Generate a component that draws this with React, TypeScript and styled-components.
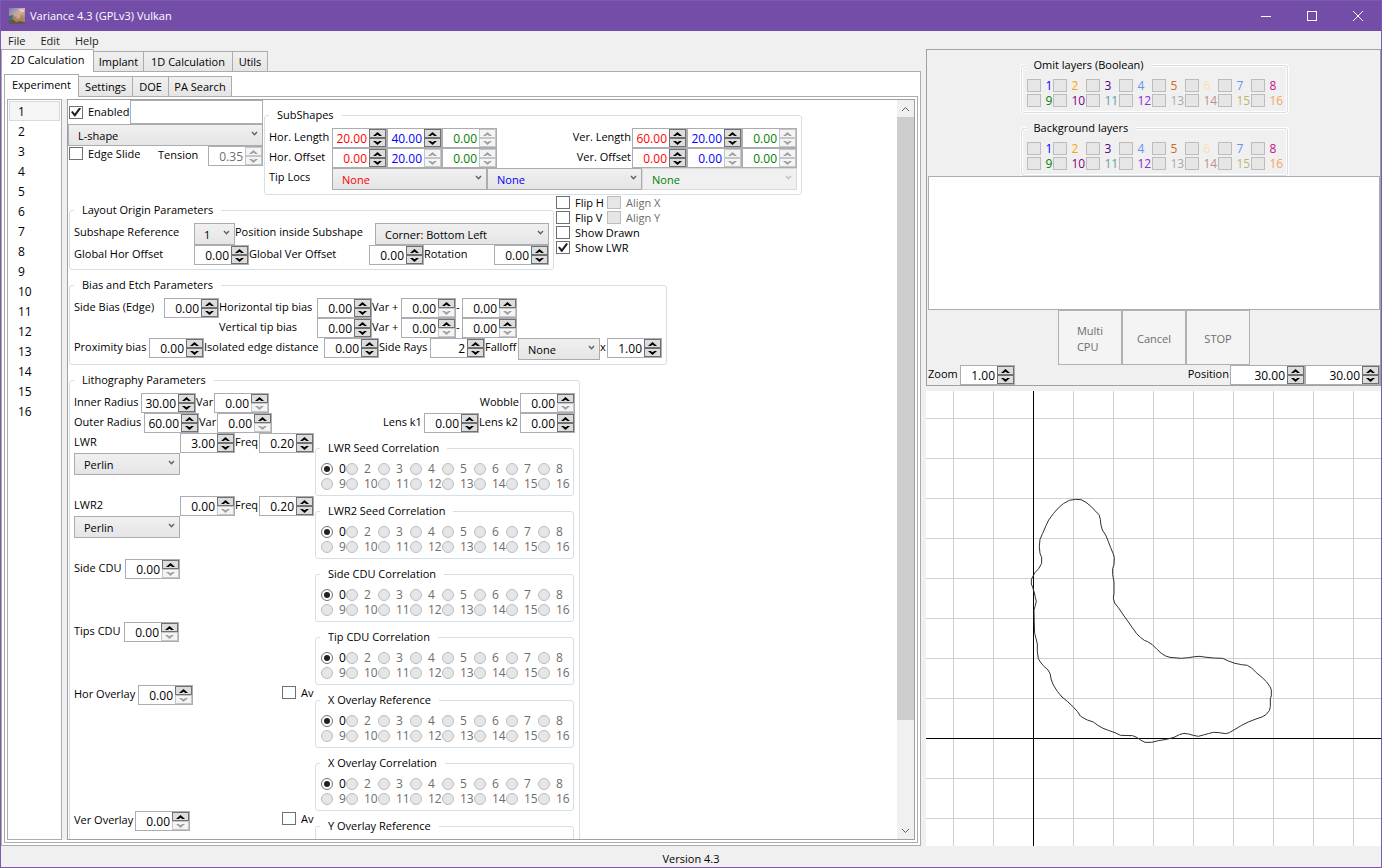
import React from "react";
import styled, { createGlobalStyle, css } from "styled-components";

const GlobalStyle = createGlobalStyle`
  *, *::before, *::after { box-sizing: border-box; }
  body { margin: 0; background: #f0f0f0; }
  body, button, input, select {
    font-family: "Open Sans", "Noto Sans", sans-serif;
    font-size: 11px;
    line-height: 16px;
    color: #000;
  }
`;

/* ---------- window frame ---------- */

const Window = styled.div`
  display: flex;
  flex-direction: column;
  height: 100vh;
  min-height: 500px;
  border: 1px solid #7d5ab0;
  background: #f0f0f0;
  overflow: hidden;
`;

const TitleBar = styled.header`
  display: flex;
  flex: none;
  align-items: center;
  height: 30px;
  padding-left: 8px;
  gap: 5px;
  background: #744da9;
  color: #fff;
`;

const Title = styled.h1`
  flex: 1;
  margin: 0;
  font-size: 11px;
  font-weight: 400;
`;

const CaptionButton = styled.button`
  display: grid;
  place-items: center;
  width: 46px;
  height: 30px;
  padding: 0;
  border: 0;
  background: none;
  color: #fff;
`;

const MenuBar = styled.nav`
  display: flex;
  flex: none;
  height: 18px;
  padding-left: 1px;
`;

const MenuItem = styled.button`
  padding: 1px 6px 0;
  margin-right: 3px;
  border: 0;
  background: none;
  color: #212121;
`;

const Main = styled.main`
  display: grid;
  flex: 1;
  min-height: 0;
  grid-template-columns: minmax(0, 1fr) 455px;
  column-gap: 5px;
`;

const StatusBar = styled.footer`
  flex: none;
  height: 21px;
  padding-top: 5px;
  text-align: center;
`;

/* ---------- tabs ---------- */

const TabControl = styled.section`
  display: flex;
  flex: 1;
  flex-direction: column;
  min-height: 0;
`;

const TabStrip = styled.div`
  display: flex;
  flex: none;
  align-items: flex-end;
  height: 22px;
`;

const Tab = styled.button<{ $w: number; $selected?: boolean }>`
  width: ${(p) => p.$w}px;
  height: 20px;
  padding: 0;
  border: 1px solid #acacac;
  border-left-width: 0;
  border-bottom: 0;
  background: linear-gradient(#f0f0f0, #e5e5e5);
  white-space: nowrap;
  ${(p) =>
    p.$selected &&
    css`
      position: relative;
      height: 23px;
      margin-bottom: -1px;
      padding-bottom: 3px;
      border-left-width: 1px;
      background: #fff;
    `}
`;

const TabPanel = styled.div`
  display: flex;
  flex: 1;
  min-height: 0;
  padding: 2px;
  border: 1px solid #acacac;
  background: #fff;
`;

/* ---------- experiment list and scroll area ---------- */

const ListBox = styled.ul`
  flex: none;
  width: 55px;
  margin: 0;
  padding: 1px;
  border: 1px solid #abadb3;
  background: #fff;
  list-style: none;
`;

const ListItem = styled.li<{ $selected?: boolean }>`
  height: 20px;
  padding-left: 8px;
  border: 1px solid ${(p) => (p.$selected ? "#dadada" : "transparent")};
  background: ${(p) => (p.$selected ? "#f5f5f5" : "none")};
  font-size: 12px;
  line-height: 19px;
`;

const Splitter = styled.div`
  flex: none;
  width: 5px;
  background: #f0f0f0;
`;

const ScrollPanel = styled.div`
  display: flex;
  flex: 1;
  min-width: 0;
  border: 1px solid #a0a0a0;
`;

const ScrollContent = styled.div`
  flex: 1;
  min-width: 0;
  overflow: hidden auto;
  scrollbar-width: none;
`;

const ScrollBar = styled.div`
  display: flex;
  flex: none;
  flex-direction: column;
  width: 17px;
  background: #f0f0f0;
`;

const ScrollButton = styled.button`
  display: grid;
  place-items: center;
  flex: none;
  height: 17px;
  padding: 0;
  border: 0;
  background: none;
`;

const ScrollThumb = styled.div`
  flex: 602;
  background: #cdcdcd;
`;

const ScrollRest = styled.div`
  flex: 102;
`;

/* ---------- form pieces ---------- */

const Row = styled.div<{ $h?: number }>`
  display: flex;
  align-items: flex-start;
  height: ${(p) => (p.$h ? `${p.$h}px` : "auto")};
`;

const Column = styled.div<{ $w?: number }>`
  display: flex;
  flex: none;
  flex-direction: column;
  width: ${(p) => (p.$w ? `${p.$w}px` : "auto")};
`;

const Spacer = styled.div`
  flex: 1;
`;

const Label = styled.label<{ $w?: number; $right?: boolean }>`
  flex: none;
  width: ${(p) => (p.$w ? `${p.$w}px` : "auto")};
  padding-right: ${(p) => (p.$right ? "1px" : "0")};
  line-height: 18px;
  text-align: ${(p) => (p.$right ? "right" : "left")};
  white-space: nowrap;
`;

const Legend = styled.legend`
  padding: 0 8px 2px;
  line-height: 15px;
`;

const Group = styled.fieldset<{ $w?: number }>`
  flex: none;
  width: ${(p) => (p.$w ? `${p.$w}px` : "auto")};
  min-width: 0;
  margin: 0;
  padding: 4px;
  border: 1px solid #d5dfe5;
  border-radius: 3px;
`;

const LayerGroup = styled(Group)`
  margin-top: 7px;
  box-shadow: inset 0 0 0 1px #fff, 0 0 0 1px #fff;

  ${Legend} {
    background: #f0f0f0;
  }
`;

const SpinBox = styled.div<{ $w: number }>`
  display: flex;
  flex: none;
  width: ${(p) => p.$w}px;
  height: 20px;
  border: 1px solid #abadb3;
  background: #fff;
`;

const SpinInput = styled.input<{ $color: string }>`
  flex: 1;
  min-width: 0;
  height: 18px;
  padding: 1px 2px 1px 0;
  border: 0;
  background: none;
  color: ${(p) => p.$color};
  font-size: 12px;
  text-align: right;
  outline: 0;
`;

const SpinButtons = styled.div`
  display: flex;
  flex: none;
  flex-direction: column;
  width: 17px;
`;

const SpinButton = styled.button`
  display: grid;
  place-items: center;
  height: 9px;
  padding: 0;
  border: 1px solid #707070;
  background: #ddd;
  color: #000;
  &:disabled {
    border-color: #c4c7c9;
    background: #f4f4f4;
    color: #a0a0a0;
  }
`;

const SelectBox = styled.div<{ $w?: number }>`
  position: relative;
  flex: none;
  width: ${(p) => (p.$w ? `${p.$w}px` : "auto")};
  height: 22px;
`;

const SelectInput = styled.select<{ $color: string }>`
  appearance: none;
  display: block;
  width: 100%;
  height: 22px;
  padding: 2px 16px 0 9px;
  border: 1px solid #acacac;
  border-radius: 0;
  background: linear-gradient(#f0f0f0, #e5e5e5);
  color: ${(p) => p.$color};
  opacity: 1;
  &:disabled {
    border-color: #d9d9d9;
    background: #f0f0f0;
    color: ${(p) => p.$color};
  }
`;

const SelectArrow = styled.svg`
  position: absolute;
  top: 7px;
  right: 5px;
  pointer-events: none;
`;

const TickLabel = styled.label<{ $color?: string; $h?: number; $gap?: number }>`
  display: flex;
  flex: none;
  align-items: center;
  gap: ${(p) => p.$gap ?? 5}px;
  height: ${(p) => p.$h ?? 15}px;
  padding-left: 1px;
  color: ${(p) => p.$color ?? "#000"};
  white-space: nowrap;
`;

const CheckInput = styled.input.attrs({ type: "checkbox" })`
  appearance: none;
  display: grid;
  place-items: center;
  flex: none;
  width: 14px;
  height: 13px;
  margin: 0;
  border: 1px solid #707070;
  background: #fff;
  &:disabled {
    border-color: #bcbcbc;
    background: #e6e6e6;
  }
  &:checked::before {
    content: "";
    width: 10px;
    height: 9px;
    background: #212121;
    clip-path: polygon(0 50%, 16% 38%, 38% 66%, 82% 0, 100% 12%, 42% 100%, 34% 100%);
  }
`;

const RadioInput = styled.input.attrs({ type: "radio" })`
  appearance: none;
  display: grid;
  place-items: center;
  flex: none;
  width: 12px;
  height: 12px;
  margin: 0;
  border: 1px solid #707070;
  border-radius: 50%;
  background: #fff;
  &:disabled {
    border-color: #bcbcbc;
    background: #e6e6e6;
  }
  &:checked::before {
    content: "";
    width: 6px;
    height: 6px;
    border-radius: 50%;
    background: #212121;
  }
`;

const OptionGrid = styled.div<{ $first: number; $rest: number }>`
  display: grid;
  grid-template-columns: ${(p) => p.$first}px repeat(7, ${(p) => p.$rest}px);
  grid-auto-rows: 15px;
  min-height: 30px;
  font-size: 12px;
`;

const NameInput = styled.input`
  flex: 1;
  min-width: 0;
  height: 24px;
  border: 1px solid #abadb3;
`;

const ShapeColumn = styled(Column)`
  margin-right: 1px;
`;

const SubShapes = styled.div`
  padding-top: 7px;
`;

const OriginRow = styled(Row)`
  padding-left: 1px;
`;

const OriginGroup = styled.div`
  padding-top: 7px;
  margin-right: 1px;
`;

const Section = styled.div`
  padding: 7px 0 0 1px;
`;

const CorrelationCell = styled.div`
  padding-top: 7px;
`;

const AverageCell = styled.div`
  width: 34px;
`;

/* ---------- right side ---------- */

const SidePane = styled.section`
  display: flex;
  flex-direction: column;
  min-height: 0;
`;

const ControlPanel = styled.div`
  display: flex;
  flex: none;
  flex-direction: column;
  align-items: center;
  padding: 0 0 0 1px;
  margin-bottom: 5px;
  border: 1px solid #a0a0a0;
`;

const LogBox = styled.div`
  position: relative;
  align-self: stretch;
  height: 134px;
  border: 1px solid #abadb3;
  background: #fff;
`;

const CommandButton = styled.button`
  width: 64px;
  height: 55px;
  padding: 2px 12px 0;
  border: 1px solid #adb2b5;
  background: #f4f4f4;
  &:disabled {
    color: #6d6d6d;
  }
`;

const ButtonText = styled.span`
  display: inline-block;
  text-align: left;
`;

const ViewRow = styled(Row)`
  align-self: stretch;
`;

const Viewport = styled.svg`
  display: block;
  flex: 1;
  width: 100%;
  min-height: 0;
  background: #fff;
`;

/* ---------- components ---------- */

type SpinProps = {
  label: string;
  value: string;
  color?: string;
  w?: number;
  up?: boolean;
  down?: boolean;
  disabled?: boolean;
};

function Spin({ label, value, color = "#000", w = 55, up = true, down = true, disabled }: SpinProps) {
  return (
    <SpinBox $w={w}>
      <SpinInput aria-label={label} defaultValue={value} $color={color} disabled={disabled} />
      <SpinButtons>
        <SpinButton aria-label={`Increase ${label}`} disabled={!up || disabled}>
          <svg width="9" height="4" viewBox="0 0 9 4">
            <path d="M4.5 0 L9 4 H6.4 L4.5 2.8 L2.6 4 H0 Z" fill="currentColor" />
          </svg>
        </SpinButton>
        <SpinButton aria-label={`Decrease ${label}`} disabled={!down || disabled}>
          <svg width="9" height="4" viewBox="0 0 9 4">
            <path d="M4.5 4 L9 0 H6.4 L4.5 1.2 L2.6 0 H0 Z" fill="currentColor" />
          </svg>
        </SpinButton>
      </SpinButtons>
    </SpinBox>
  );
}

type DropProps = { label: string; value: string; w?: number; color?: string; disabled?: boolean };

function Drop({ label, value, w, color = "#000", disabled }: DropProps) {
  return (
    <SelectBox $w={w}>
      <SelectInput aria-label={label} $color={color} disabled={disabled}>
        <option>{value}</option>
      </SelectInput>
      <SelectArrow width="7" height="5" viewBox="0 0 7 5">
        <path d="M1 1 L3.5 3.7 L6 1" fill="none" stroke={disabled ? "#bfbfbf" : "#606060"} strokeWidth="1.4" />
      </SelectArrow>
    </SelectBox>
  );
}

type CheckProps = { text: string; color?: string; checked?: boolean; disabled?: boolean; h?: number };

function Check({ text, color, checked, disabled, h }: CheckProps) {
  return (
    <TickLabel $color={color} $h={h}>
      <CheckInput defaultChecked={checked} disabled={disabled} />
      {text}
    </TickLabel>
  );
}

const radioTexts = ["0", "2", "3", "4", "5", "6", "7", "8", "9", "10", "11", "12", "13", "14", "15", "16"];

function Correlation({ title, options = radioTexts }: { title: string; options?: string[] }) {
  return (
    <CorrelationCell>
      <Group $w={259}>
        <Legend>{title}</Legend>
        <OptionGrid $first={25} $rest={32}>
          {options.map((text, i) => (
            <TickLabel key={text} $gap={6} $color={i ? "#6d6d6d" : "#000"}>
              <RadioInput name={title} defaultChecked={i === 0} disabled={i > 0} />
              {text}
            </TickLabel>
          ))}
        </OptionGrid>
      </Group>
    </CorrelationCell>
  );
}

const layerColors = [
  "#0000ff", "#ffa500", "#4b0082", "#6495ed", "#d2691e", "#ffdead", "#6495ed", "#c71585",
  "#008000", "#800080", "#5f9ea0", "#8a2be2", "#a9a9a9", "#bc8f8f", "#bdb76b", "#f4a460",
];

function Layers({ title }: { title: string }) {
  return (
    <LayerGroup $w={267}>
      <Legend>{title}</Legend>
      <OptionGrid $first={26} $rest={33}>
        {layerColors.map((color, i) => (
          <Check key={i} text={String(i + 1)} color={color} disabled />
        ))}
      </OptionGrid>
    </LayerGroup>
  );
}

const red = "#ff0000";
const blue = "#0000ff";
const green = "#008000";

function ShapeSection() {
  return (
    <Row>
      <ShapeColumn $w={195}>
        <Row>
          <Column $w={62}>
            <Check text="Enabled" checked h={24} />
          </Column>
          <NameInput aria-label="Name" />
        </Row>
        <Drop label="Shape" value="L-shape" />
        <Row>
          <Check text="Edge Slide" />
          <Spacer />
          <Label $w={50}>Tension</Label>
          <Spin label="Tension" value="0.35" color="#6d6d6d" disabled />
        </Row>
      </ShapeColumn>
      <SubShapes>
        <Group $w={538}>
          <Legend>SubShapes</Legend>
          <Row>
            <Label $w={63}>Hor. Length</Label>
            <Spin label="Horizontal length 1" value="20.00" color={red} />
            <Spin label="Horizontal length 2" value="40.00" color={blue} />
            <Spin label="Horizontal length 3" value="0.00" color={green} disabled />
            <Spacer />
            <Label $right>Ver. Length</Label>
            <Spin label="Vertical length 1" value="60.00" color={red} />
            <Spin label="Vertical length 2" value="20.00" color={blue} />
            <Spin label="Vertical length 3" value="0.00" color={green} disabled />
          </Row>
          <Row>
            <Label $w={63}>Hor. Offset</Label>
            <Spin label="Horizontal offset 1" value="0.00" color={red} />
            <Spin label="Horizontal offset 2" value="20.00" color={blue} disabled />
            <Spin label="Horizontal offset 3" value="0.00" color={green} disabled />
            <Spacer />
            <Label $right>Ver. Offset</Label>
            <Spin label="Vertical offset 1" value="0.00" color={red} />
            <Spin label="Vertical offset 2" value="0.00" color={blue} disabled />
            <Spin label="Vertical offset 3" value="0.00" color={green} disabled />
          </Row>
          <Row>
            <Label $w={63}>Tip Locs</Label>
            <Drop label="Tip location 1" value="None" w={155} color={red} />
            <Drop label="Tip location 2" value="None" w={155} color={blue} />
            <Drop label="Tip location 3" value="None" w={155} color={green} disabled />
          </Row>
        </Group>
      </SubShapes>
    </Row>
  );
}

function OriginSection() {
  return (
    <OriginRow>
      <OriginGroup>
        <Group $w={485}>
          <Legend>Layout Origin Parameters</Legend>
          <Row>
            <Label $w={120}>Subshape Reference</Label>
            <Drop label="Subshape Reference" value="1" w={41} />
            <Label $w={140}>Position inside Subshape</Label>
            <Drop label="Position inside Subshape" value="Corner: Bottom Left" w={174} />
          </Row>
          <Row>
            <Label $w={120}>Global Hor Offset</Label>
            <Spin label="Global Hor Offset" value="0.00" />
            <Label $w={120}>Global Ver Offset</Label>
            <Spin label="Global Ver Offset" value="0.00" />
            <Label $w={70}>Rotation</Label>
            <Spin label="Rotation" value="0.00" />
          </Row>
        </Group>
      </OriginGroup>
      <Column $w={51}>
        <Check text="Flip H" />
        <Check text="Flip V" />
        <Check text="Show Drawn" />
        <Check text="Show LWR" checked />
      </Column>
      <Column>
        <Check text="Align X" color="#6d6d6d" disabled />
        <Check text="Align Y" color="#6d6d6d" disabled />
      </Column>
    </OriginRow>
  );
}

function BiasSection() {
  return (
    <Section>
      <Group $w={598}>
        <Legend>Bias and Etch Parameters</Legend>
        <Row>
          <Label $w={90}>Side Bias (Edge)</Label>
          <Spin label="Side Bias" value="0.00" />
          <Label $w={98}>Horizontal tip bias</Label>
          <Spin label="Horizontal tip bias" value="0.00" />
          <Label $w={29}>Var +</Label>
          <Spin label="Horizontal tip bias plus" value="0.00" down={false} />
          <Label $w={6}>-</Label>
          <Spin label="Horizontal tip bias minus" value="0.00" down={false} />
        </Row>
        <Row>
          <Label $w={145} />
          <Label $w={98}>Vertical tip bias</Label>
          <Spin label="Vertical tip bias" value="0.00" />
          <Label $w={29}>Var +</Label>
          <Spin label="Vertical tip bias plus" value="0.00" down={false} />
          <Label $w={6}>-</Label>
          <Spin label="Vertical tip bias minus" value="0.00" down={false} />
        </Row>
        <Row>
          <Label $w={75}>Proximity bias</Label>
          <Spin label="Proximity bias" value="0.00" />
          <Label $w={120}>Isolated edge distance</Label>
          <Spin label="Isolated edge distance" value="0.00" />
          <Label $w={51}>Side Rays</Label>
          <Spin label="Side Rays" value="2" />
          <Label $w={33}>Falloff</Label>
          <Drop label="Falloff" value="None" w={82} />
          <Label $w={7}>x</Label>
          <Spin label="Falloff multiplier" value="1.00" />
        </Row>
      </Group>
    </Section>
  );
}

function RoughnessRow({ name, value, down, title }: { name: string; value: string; down: boolean; title: string }) {
  return (
    <Row $h={63}>
      <Column $w={241}>
        <Row>
          <Label $w={106}>{name}</Label>
          <Spin label={name} value={value} down={down} />
          <Label $w={24}>Freq</Label>
          <Spin label={`${name} frequency`} value="0.20" />
        </Row>
        <Drop label={`${name} noise type`} value="Perlin" w={106} />
      </Column>
      <Correlation title={title} />
    </Row>
  );
}

type VariationProps = { name: string; w: number; title: string; average?: boolean; options?: string[] };

function VariationRow({ name, w, title, average, options }: VariationProps) {
  return (
    <Row $h={63}>
      <Column $w={241}>
        <Row>
          <Label $w={w}>{name}</Label>
          <Spin label={name} value="0.00" down={false} />
          <Spacer />
          {average && (
            <AverageCell>
              <Check text="Av" />
            </AverageCell>
          )}
        </Row>
      </Column>
      <Correlation title={title} options={options} />
    </Row>
  );
}

function LithoSection() {
  return (
    <Section>
      <Group $w={511}>
        <Legend>Lithography Parameters</Legend>
        <Row>
          <Label $w={67}>Inner Radius</Label>
          <Spin label="Inner Radius" value="30.00" />
          <Label $w={18}>Var</Label>
          <Spin label="Inner Radius variation" value="0.00" down={false} />
          <Spacer />
          <Label $right>Wobble</Label>
          <Spin label="Wobble" value="0.00" down={false} />
        </Row>
        <Row>
          <Label $w={70}>Outer Radius</Label>
          <Spin label="Outer Radius" value="60.00" />
          <Label $w={18}>Var</Label>
          <Spin label="Outer Radius variation" value="0.00" down={false} />
          <Spacer />
          <Label $w={41}>Lens k1</Label>
          <Spin label="Lens k1" value="0.00" />
          <Label $w={41}>Lens k2</Label>
          <Spin label="Lens k2" value="0.00" />
        </Row>
        <RoughnessRow name="LWR" value="3.00" down title="LWR Seed Correlation" />
        <RoughnessRow name="LWR2" value="0.00" down={false} title="LWR2 Seed Correlation" />
        <VariationRow name="Side CDU" w={51} title="Side CDU Correlation" />
        <VariationRow name="Tips CDU" w={50} title="Tip CDU Correlation" />
        <VariationRow name="Hor Overlay" w={64} title="X Overlay Reference" average />
        <Row $h={63}>
          <Column $w={241} />
          <Correlation title="X Overlay Correlation" />
        </Row>
        <VariationRow name="Ver Overlay" w={61} title="Y Overlay Reference" average options={[]} />
      </Group>
    </Section>
  );
}

/* Simulated contour, in thirds of a pixel. */
const contour =
  "M287 58 L303 59 L318 67 L334 80 L346 93 L357 104 L361 118 L363 135 L367 150 L377 165 L384 182 L392 203 L400 222 " +
  "L403 232 L402 255 L398 265 L398 284 L402 305 L402 340 L400 355 L404 369 L418 387 L430 405 L443 423 L457 443 " +
  "L470 461 L481 472 L493 481 L503 485 L517 494 L531 508 L544 520 L557 528 L570 532 L604 535 L625 533 L645 530 " +
  "L660 529 L672 531 L700 534 L728 535 L745 543 L765 550 L785 554 L802 556 L815 564 L829 578 L846 592 L860 606 " +
  "L870 620 L874 630 L874 648 L871 655 L871 680 L868 692 L858 704 L846 711 L828 717 L805 726 L785 736 L765 748 " +
  "L748 758 L737 761 L718 758 L700 757 L685 761 L670 765 L655 769 L640 766 L625 762 L612 760 L598 764 L582 772 " +
  "L560 778 L535 782 L515 787 L495 787 L482 780 L470 772 L458 767 L422 766 L405 758 L385 751 L367 744 L352 735 " +
  "L340 726 L322 720 L310 714 L301 708 L292 694 L279 680 L262 664 L246 651 L232 634 L220 615 L214 600 L210 580 " +
  "L204 570 L190 557 L181 546 L175 536 L172 515 L172 492 L168 475 L164 460 L163 435 L162 390 L166 376 L169 364 " +
  "L166 352 L163 338 L158 322 L154 312 L154 300 L158 290 L165 278 L176 266 L185 250 L185 232 L180 220 L178 200 " +
  "L180 178 L188 160 L198 137 L206 120 L220 101 L235 84 L250 71 L268 61 Z";

function DrawingView() {
  return (
    <Viewport role="img" aria-label="Shape preview">
      <defs>
        <pattern id="grid" x="27" y="27" width="40" height="40" patternUnits="userSpaceOnUse">
          <path d="M0 0 H40 V1 H1 V40 H0 Z" fill="#d0d0d0" />
        </pattern>
      </defs>
      <rect width="100%" height="100%" fill="url(#grid)" />
      <rect x="107" y="0" width="1" height="100%" fill="#000" />
      <rect x="0" y="347" width="100%" height="1" fill="#000" />
      <g transform="translate(54 89) scale(0.33333)">
        <path d={contour} fill="none" stroke="#303030" strokeWidth="1" vectorEffect="non-scaling-stroke" />
      </g>
    </Viewport>
  );
}

function AppIcon() {
  return (
    <svg width="16" height="16" viewBox="0 0 16 16">
      <defs>
        <linearGradient id="sky" x1="0" y1="0" x2="1" y2="1">
          <stop offset="0" stopColor="#6f7fb0" />
          <stop offset="0.5" stopColor="#d3b3ab" />
          <stop offset="1" stopColor="#8a6a4e" />
        </linearGradient>
      </defs>
      <rect width="16" height="16" fill="url(#sky)" />
      <path d="M0 8 L4 6 L6 9 L9 5 L12 6 L14 10 L16 11 V16 H0 Z" fill="#a98468" />
      <path d="M0 12 L4 11 L7 14 L11 13 L16 14 V16 H0 Z" fill="#5c5a48" />
      <path d="M7 7 L9 5 L12 6 L11 10 L8 11 Z" fill="#d0aa86" />
      <path d="M0 8 L3 7 L4 10 L1 12 L0 12 Z" fill="#4b6a74" />
      <path d="M10 1 L15 2 L15 4 L11 3 Z" fill="#f0cfc4" />
    </svg>
  );
}

export default function App() {
  return (
    <>
      <GlobalStyle />
      <Window>
        <TitleBar>
          <AppIcon />
          <Title>Variance 4.3 (GPLv3) Vulkan</Title>
          <Row>
            <CaptionButton aria-label="Minimize">
              <svg width="10" height="10">
                <path d="M0 5.5 H10" stroke="currentColor" />
              </svg>
            </CaptionButton>
            <CaptionButton aria-label="Maximize">
              <svg width="10" height="10">
                <rect x="0.5" y="0.5" width="9" height="9" fill="none" stroke="currentColor" />
              </svg>
            </CaptionButton>
            <CaptionButton aria-label="Close">
              <svg width="10" height="10">
                <path d="M0 0 L10 10 M10 0 L0 10" stroke="currentColor" />
              </svg>
            </CaptionButton>
          </Row>
        </TitleBar>
        <MenuBar>
          <MenuItem>File</MenuItem>
          <MenuItem>Edit</MenuItem>
          <MenuItem>Help</MenuItem>
        </MenuBar>
        <Main>
          <TabControl>
            <TabStrip role="tablist">
              <Tab role="tab" aria-selected $w={93} $selected>2D Calculation</Tab>
              <Tab role="tab" $w={50}>Implant</Tab>
              <Tab role="tab" $w={89}>1D Calculation</Tab>
              <Tab role="tab" $w={35}>Utils</Tab>
            </TabStrip>
            <TabPanel>
              <TabControl>
                <TabStrip role="tablist">
                  <Tab role="tab" aria-selected $w={75} $selected>Experiment</Tab>
                  <Tab role="tab" $w={54}>Settings</Tab>
                  <Tab role="tab" $w={36}>DOE</Tab>
                  <Tab role="tab" $w={63}>PA Search</Tab>
                </TabStrip>
                <TabPanel>
                  <ListBox>
                    {Array.from({ length: 16 }, (_, i) => (
                      <ListItem key={i} $selected={i === 0}>{i + 1}</ListItem>
                    ))}
                  </ListBox>
                  <Splitter />
                  <ScrollPanel>
                    <ScrollContent>
                      <ShapeSection />
                      <OriginSection />
                      <BiasSection />
                      <LithoSection />
                    </ScrollContent>
                    <ScrollBar>
                      <ScrollButton aria-label="Scroll up">
                        <svg width="9" height="6">
                          <path d="M1 5 L4.5 1.5 L8 5" fill="none" stroke="#606060" />
                        </svg>
                      </ScrollButton>
                      <ScrollThumb />
                      <ScrollRest />
                      <ScrollButton aria-label="Scroll down">
                        <svg width="9" height="6">
                          <path d="M1 1 L4.5 4.5 L8 1" fill="none" stroke="#606060" />
                        </svg>
                      </ScrollButton>
                    </ScrollBar>
                  </ScrollPanel>
                </TabPanel>
              </TabControl>
            </TabPanel>
          </TabControl>
          <SidePane>
            <ControlPanel>
              <Layers title="Omit layers (Boolean)" />
              <Layers title="Background layers" />
              <LogBox />
              <Row>
                <CommandButton disabled>
                  <ButtonText>Multi<br />CPU</ButtonText>
                </CommandButton>
                <CommandButton disabled>
                  <ButtonText>Cancel</ButtonText>
                </CommandButton>
                <CommandButton disabled>
                  <ButtonText>STOP</ButtonText>
                </CommandButton>
              </Row>
              <ViewRow>
                <Label $w={32}>Zoom</Label>
                <Spin label="Zoom" value="1.00" />
                <Spacer />
                <Label $right>Position</Label>
                <Spin label="Position X" value="30.00" w={75} />
                <Spin label="Position Y" value="30.00" w={75} />
              </ViewRow>
            </ControlPanel>
            <DrawingView />
          </SidePane>
        </Main>
        <StatusBar>Version 4.3</StatusBar>
      </Window>
    </>
  );
}
